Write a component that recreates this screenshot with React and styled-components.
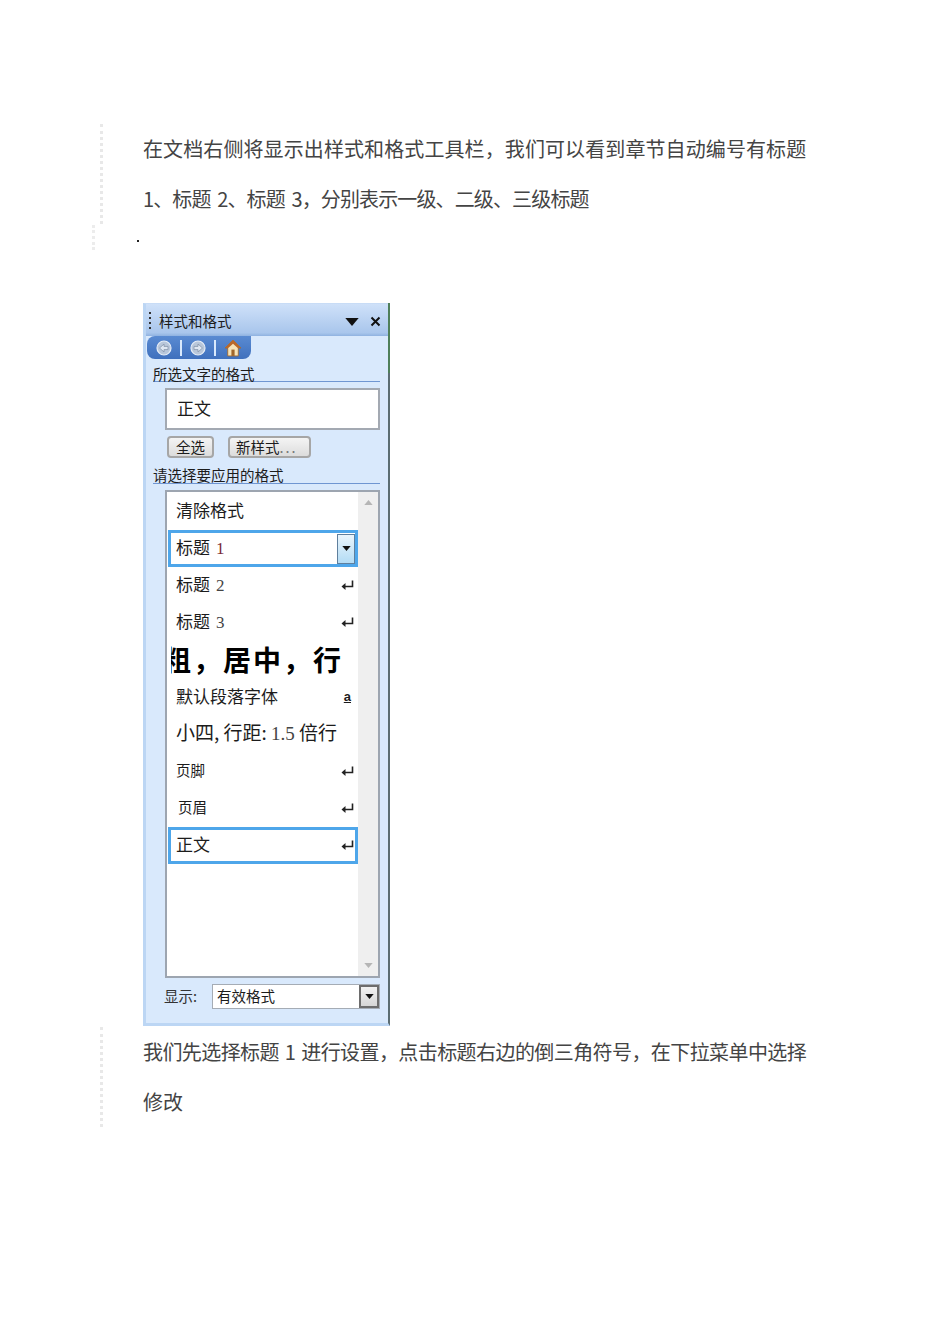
import React from "react"
import styled, { createGlobalStyle } from "styled-components"

const GlobalStyle = createGlobalStyle`
  html, body { margin: 0; padding: 0; background: #fff; }
  body { font-family: "Noto Sans CJK SC", "Noto Sans", sans-serif; }
`

const Page = styled.div`
  width: 950px;
  height: 1344px;
  padding-top: 124px;
  box-sizing: border-box;
  overflow: hidden;
  color: #404040;
`

const Quote = styled.div`
  margin-left: 100px;
  padding-left: 40px;
  border-left: 3px dotted #e8e8e8;
  width: 680px;
  height: ${p => p.$h}px;
`

const Line = styled.p`
  margin: 0;
  font-size: 20px;
  line-height: 50px;
  height: 50px;
  white-space: nowrap;
  color: #444;
  letter-spacing: ${p => p.$ls || 0}px;
  word-spacing: ${p => p.$ws || 0}px;
`

const DotRow = styled.div`
  margin: 1px 0 0 92px;
  padding-left: 41px;
  height: 25px;
  border-left: 3px dotted #ececec;
  position: relative;
`

const Dot = styled.span`
  position: absolute;
  left: 42px;
  top: 15px;
  width: 2px;
  height: 2px;
  background: #222;
`

const PanelWrap = styled.div`
  margin: 53px 0 1px 143px;
`

const Panel = styled.div`
  position: relative;
  width: 247px;
  height: 723px;
  box-sizing: border-box;
  border-left: 3px solid #bcd6f4;
  border-top: 1px solid #c8dcf6;
  border-bottom: 3px solid #bcd6f4;
  border-right: 2px solid #5c6d72;
  background: #d9e9fc;
  display: flex;
  flex-direction: column;
  font-family: "Noto Sans CJK SC", sans-serif;
  color: #1c1c1c;
`

const GreenEdge = styled.span`
  position: absolute;
  top: -1px;
  right: -2px;
  width: 2px;
  height: 70px;
  background: #4f7f5a;
`

const TitleBar = styled.div`
  height: 32px;
  flex: none;
  display: flex;
  align-items: center;
  padding: 3px 7px 0 3px;
  box-sizing: border-box;
  background: linear-gradient(#cfe1f9, #a9c6ec 90%, #8fb2e0);
  font-size: 14.5px;
`

const Grip = styled.span`
  width: 2px;
  height: 20px;
  margin-right: 8px;
  background: repeating-linear-gradient(#333 0 2px, transparent 2px 5px);
`

const TitleText = styled.span`
  flex: 1;
  margin-bottom: 3px;
`

const TitleIcons = styled.div`
  display: flex;
  align-items: center;
  gap: 11px;
`

const Body = styled.div`
  flex: 1;
  position: relative;
  display: flex;
  flex-direction: column;
  background: #d9e9fc;
`

const NavTab = styled.div`
  width: 104px;
  height: 23px;
  margin-left: 1px;
  background: linear-gradient(#5a8bd2, #3f70bd);
  border-radius: 8px 0 8px 8px;
  display: flex;
  align-items: center;
  padding-left: 9px;
  box-sizing: border-box;
`

const NavSep = styled.span`
  width: 2px;
  height: 16px;
  margin: 0 8px;
  background: #d9e9fc;
`

const SectionTitle = styled.div`
  margin: ${p => p.$top}px 8px 0 7px;
  height: ${p => p.$h}px;
  line-height: 20px;
  font-size: 14.5px;
  border-bottom: 1px solid #6f96d2;
  white-space: nowrap;
`

const SelectedBox = styled.div`
  margin: 6px 8px 0 19px;
  height: 42px;
  box-sizing: border-box;
  border: 2px solid #a3a9b2;
  background: #fff;
  display: flex;
  align-items: center;
  padding: 0 0 3px 10px;
  font-size: 17px;
`

const ButtonRow = styled.div`
  display: flex;
  gap: 14px;
  margin: 6px 0 0 21px;
`

const Btn = styled.div`
  width: ${p => p.$w}px;
  height: 22px;
  box-sizing: border-box;
  border: 2px solid #a6a6a6;
  border-radius: 4px;
  background: linear-gradient(#f4f4f4, #dcdcdc);
  font-size: 14.5px;
  line-height: 17px;
  padding-left: ${p => p.$pad}px;
  white-space: nowrap;
`

const Dots = styled.span`
  color: #777;
  letter-spacing: 2px;
`

const ListBox = styled.div`
  margin: 6px 8px 0 19px;
  height: 488px;
  box-sizing: border-box;
  border: 2px solid #9da5b0;
  background: #fff;
  display: flex;
`

const List = styled.div`
  flex: 1;
  min-width: 0;
  padding: 1px 0 0 1px;
  overflow: hidden;
`

const Row = styled.div`
  height: ${p => (p.$short ? 36.5 : 37)}px;
  box-sizing: border-box;
  display: flex;
  align-items: center;
  justify-content: space-between;
  padding: 0 4px 0 ${p => p.$indent ?? 8}px;
  font-size: ${p => p.$size || 17}px;
  white-space: nowrap;
  border: ${p => (p.$active ? "3px solid #4ea6ea" : "none")};
  ${p => p.$active && "padding-left: 5px; padding-right: 1px;"}
`

const Label = styled.span`
  margin-bottom: ${p => p.$lift ?? 5}px;
`

const Serif = styled.span`
  font-family: "Liberation Serif", serif;
  color: ${p => p.$color || "#444"};
  margin-left: ${p => p.$gap ?? 6}px;
  font-size: ${p => p.$size || 17}px;
`

const BoldClip = styled.div`
  height: 38px;
  overflow: hidden;
  display: flex;
  align-items: center;
  margin-left: 3px;
  font-size: 28px;
  font-weight: 700;
  color: #000;
  white-space: nowrap;
`

const BoldText = styled.span`
  display: block;
  margin: 0 0 2px -8px;
  letter-spacing: 2px;
`

const UnderA = styled.span`
  font-family: "Liberation Sans", sans-serif;
  font-weight: 700;
  font-size: 13px;
  text-decoration: underline;
  margin: 0 3px 2px 0;
`

const DropBtn = styled.span`
  width: 18px;
  height: 30px;
  margin-right: -1px;
  box-sizing: border-box;
  border: 1px solid #5f7f9d;
  background: linear-gradient(#eaf5fc, #b3dcf5);
  display: flex;
  align-items: center;
  justify-content: center;
`

const ScrollTrack = styled.div`
  width: 20px;
  flex: none;
  background: #efefef;
  display: flex;
  flex-direction: column;
  align-items: center;
  justify-content: space-between;
  padding: 8px 0 8px;
  box-sizing: border-box;
`

const Footer = styled.div`
  display: flex;
  align-items: center;
  margin: 6px 8px 0 18px;
  font-size: 14.5px;
`

const FooterLabel = styled.span`
  width: 48px;
  color: #333;
  margin-bottom: 2px;
`

const Combo = styled.div`
  flex: 1;
  height: 25px;
  box-sizing: border-box;
  border: 1px solid #a5acb5;
  background: #fff;
  display: flex;
  justify-content: space-between;
  align-items: center;
  padding-left: 4px;
`

const ComboText = styled.span`
  margin-bottom: 2px;
`

const ComboBtn = styled.span`
  width: 20px;
  height: 23px;
  box-sizing: border-box;
  border: 2px solid #6d6d6d;
  background: linear-gradient(#f2f2f2, #d6d6d6);
  display: flex;
  align-items: center;
  justify-content: center;
`

const Tri = ({ w = 9, h = 5, c = "#111" }) => (
  <svg width={w} height={h} viewBox="0 0 10 6"><path d="M0 0h10L5 6z" fill={c} /></svg>
)

const Up = () => (
  <svg width="9" height="5" viewBox="0 0 10 6"><path d="M0 6h10L5 0z" fill="#b5b5b5" /></svg>
)

const Close = () => (
  <svg width="11" height="11" viewBox="0 0 11 11">
    <path d="M1.5 1.5l8 8M9.5 1.5l-8 8" stroke="#111" strokeWidth="2" />
  </svg>
)

const Enter = () => (
  <svg width="13" height="11" viewBox="0 0 13 11">
    <path d="M11.5 0.5v6h-8" fill="none" stroke="#222" strokeWidth="1.6" />
    <path d="M0.5 6.5l4-3.5v7z" fill="#222" />
  </svg>
)

const NavIcon = ({ left }) => (
  <svg width="16" height="16" viewBox="0 0 16 16">
    <circle cx="8" cy="8" r="7" fill="#b9c7da" stroke="#e6edf6" strokeWidth="1.2" />
    <path d={left ? "M3.5 8L8 4v2.4h4v3.2H8V12z" : "M12.5 8L8 4v2.4H4v3.2h4V12z"} fill="#dfe7f2" stroke="#8595ab" strokeWidth=".8" />
  </svg>
)

const Home = () => (
  <svg width="18" height="18" viewBox="0 0 17 17">
    <path d="M8.5 1L1 8.5h2.5V16h10V8.5H16z" fill="#f6e3b8" stroke="#a0662a" strokeWidth=".8" />
    <path d="M8.5 1L1 8.5h3L8.5 4.5 13 8.5h3z" fill="#b9672a" />
    <rect x="7" y="10" width="3" height="6" fill="#a0662a" />
  </svg>
)

const App = () => {
  return (
    <Page>
      <GlobalStyle />
      <Quote $h={100}>
        <Line $ls={0.1}>在文档右侧将显示出样式和格式工具栏，我们可以看到章节自动编号有标题</Line>
        <Line $ls={-0.87} $ws={3}>1、标题 2、标题 3，分别表示一级、二级、三级标题</Line>
      </Quote>
      <DotRow><Dot /></DotRow>
      <PanelWrap>
        <Panel>
          <GreenEdge />
          <TitleBar>
            <Grip />
            <TitleText>样式和格式</TitleText>
            <TitleIcons>
              <Tri w={14} h={8} />
              <Close />
            </TitleIcons>
          </TitleBar>
          <Body>
            <NavTab>
              <NavIcon left />
              <NavSep />
              <NavIcon />
              <NavSep />
              <Home />
            </NavTab>
            <SectionTitle $top={5} $h={17}>所选文字的格式</SectionTitle>
            <SelectedBox>正文</SelectedBox>
            <ButtonRow>
              <Btn $w={47} $pad={7}>全选</Btn>
              <Btn $w={83} $pad={6}>新样式<Dots>...</Dots></Btn>
            </ButtonRow>
            <SectionTitle $top={7} $h={18}>请选择要应用的格式</SectionTitle>
            <ListBox>
              <List>
                <Row><Label>清除格式</Label></Row>
                <Row $active>
                  <Label>标题<Serif $color="#7a2a35">1</Serif></Label>
                  <DropBtn><Tri /></DropBtn>
                </Row>
                <Row>
                  <Label>标题<Serif>2</Serif></Label>
                  <Enter />
                </Row>
                <Row>
                  <Label>标题<Serif>3</Serif></Label>
                  <Enter />
                </Row>
                <BoldClip><BoldText>粗，居中，行</BoldText></BoldClip>
                <Row $short>
                  <Label $lift={3}>默认段落字体</Label>
                  <UnderA>a</UnderA>
                </Row>
                <Row $size={19}>
                  <Label>小四, 行距: <Serif $gap={0} $size={19}>1.5</Serif> 倍行</Label>
                </Row>
                <Row $size={14.5}>
                  <Label $lift={3}>页脚</Label>
                  <Enter />
                </Row>
                <Row $size={14.5} $indent={10}>
                  <Label $lift={3}>页眉</Label>
                  <Enter />
                </Row>
                <Row $active>
                  <Label $lift={3}>正文</Label>
                  <Enter />
                </Row>
              </List>
              <ScrollTrack>
                <Up />
                <Tri c="#b5b5b5" />
              </ScrollTrack>
            </ListBox>
            <Footer>
              <FooterLabel>显示:</FooterLabel>
              <Combo>
                <ComboText>有效格式</ComboText>
                <ComboBtn><Tri /></ComboBtn>
              </Combo>
            </Footer>
          </Body>
        </Panel>
      </PanelWrap>
      <Quote $h={100}>
        <Line $ls={-0.58} $ws={2}>我们先选择标题 1 进行设置，点击标题右边的倒三角符号，在下拉菜单中选择</Line>
        <Line>修改</Line>
      </Quote>
    </Page>
  )
}

export default App
